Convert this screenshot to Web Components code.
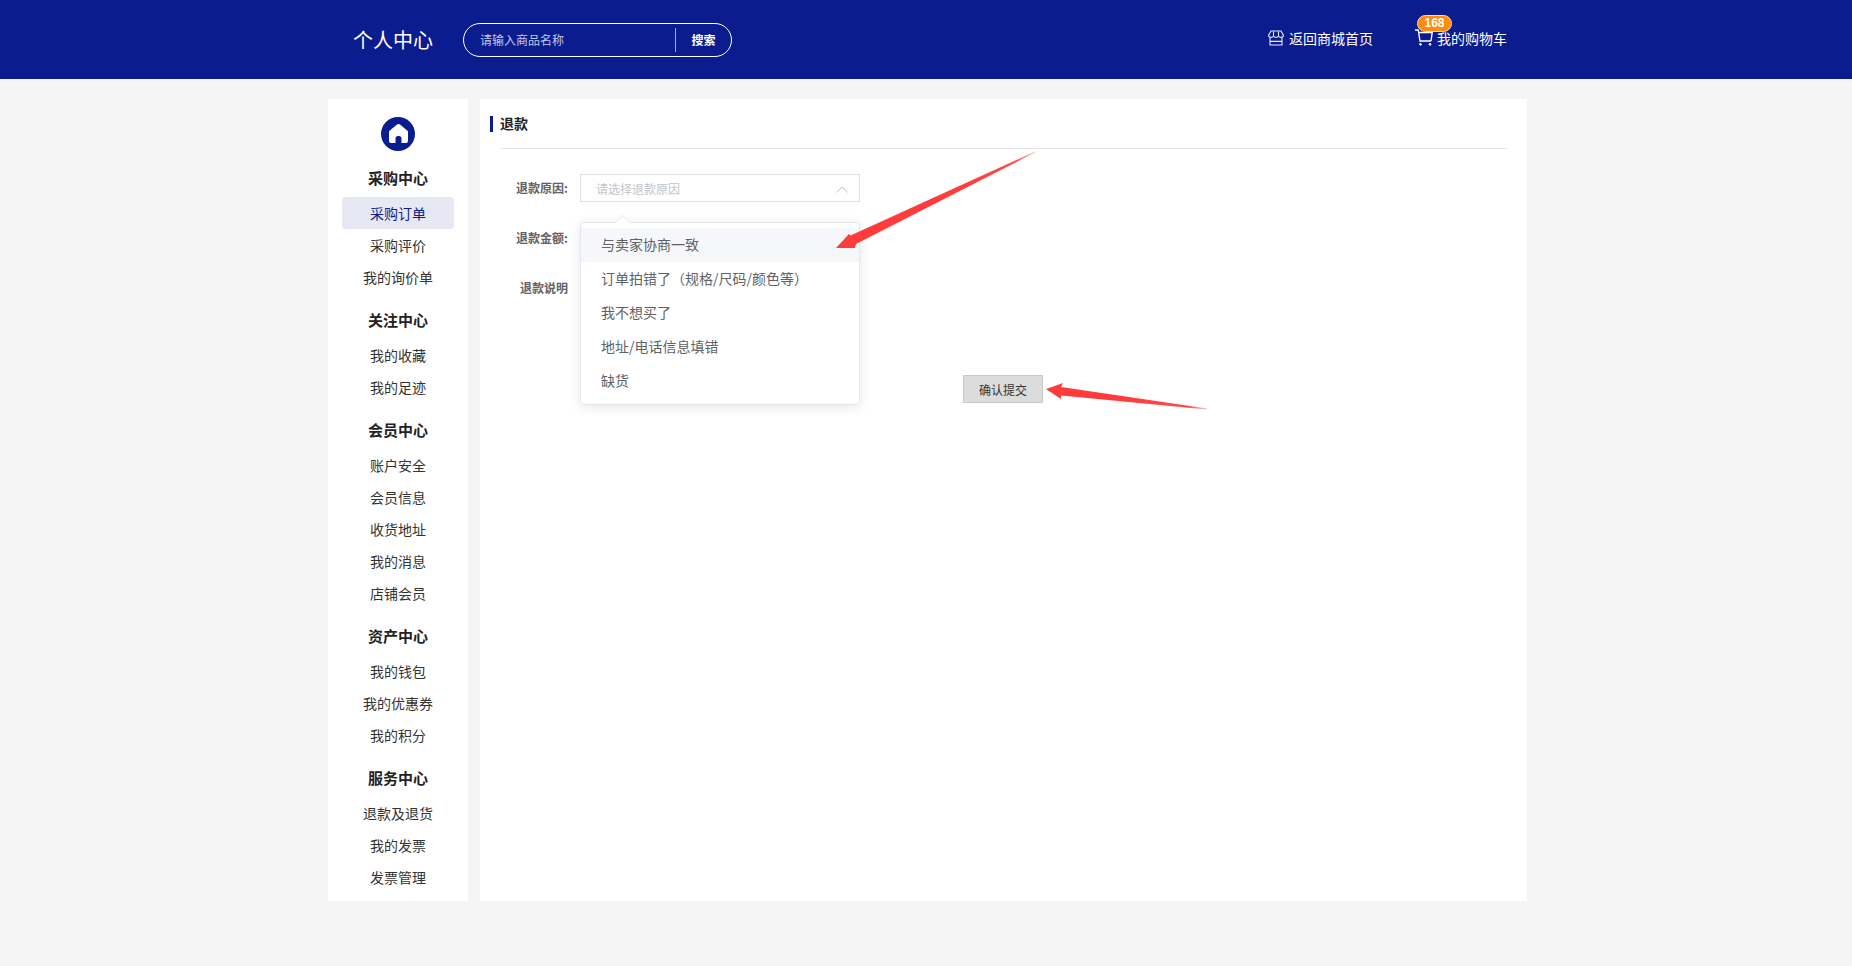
<!DOCTYPE html>
<html lang="zh-CN">
<head>
<meta charset="utf-8">
<title>退款</title>
<style>
    html,body{margin:0;padding:0;}
    body{
        background:#f5f5f5;
        font-family:"Noto Sans CJK SC","Liberation Sans",sans-serif;
        min-height:966px;
        overflow:hidden;
    }
    .page{
        display:flex;
        gap:12px;
        align-items:stretch;
        margin:20px 0 0 328px;
        width:1199px;
        height:802px;
    }
</style>
</head>
<body>
<top-bar></top-bar>
<div class="page">
    <side-nav>
        <nav-group heading="采购中心">
            <nav-item active>采购订单</nav-item>
            <nav-item>采购评价</nav-item>
            <nav-item>我的询价单</nav-item>
        </nav-group>
        <nav-group heading="关注中心">
            <nav-item>我的收藏</nav-item>
            <nav-item>我的足迹</nav-item>
        </nav-group>
        <nav-group heading="会员中心">
            <nav-item>账户安全</nav-item>
            <nav-item>会员信息</nav-item>
            <nav-item>收货地址</nav-item>
            <nav-item>我的消息</nav-item>
            <nav-item>店铺会员</nav-item>
        </nav-group>
        <nav-group heading="资产中心">
            <nav-item>我的钱包</nav-item>
            <nav-item>我的优惠券</nav-item>
            <nav-item>我的积分</nav-item>
        </nav-group>
        <nav-group heading="服务中心">
            <nav-item>退款及退货</nav-item>
            <nav-item>我的发票</nav-item>
            <nav-item>发票管理</nav-item>
        </nav-group>
    </side-nav>
    <refund-panel>
        <form-row label="退款原因:">
            <reason-select placeholder="请选择退款原因">
                <span>与卖家协商一致</span>
                <span>订单拍错了（规格/尺码/颜色等）</span>
                <span>我不想买了</span>
                <span>地址/电话信息填错</span>
                <span>缺货</span>
            </reason-select>
        </form-row>
        <form-row label="退款金额:"><text-box></text-box></form-row>
        <form-row label="退款说明"><text-box tall></text-box></form-row>
    </refund-panel>
</div>
<script>
class BaseEl extends HTMLElement{
    constructor(){
        super();
        this.attachShadow({mode:'open'});
    }
}

class TopBar extends BaseEl{
    constructor(){
        super();
        this.shadowRoot.innerHTML = `
        <style>
            :host{
                display:flex;
                align-items:center;
                height:79px;
                background:#0b1c8f;
                color:#fff;
                padding-left:353px;
                box-sizing:border-box;
            }
            .logo{font-size:20px;width:110px;line-height:79px;}
            .search{
                display:flex;
                align-items:center;
                box-sizing:border-box;
                width:269px;
                height:34px;
                border:1px solid #fff;
                border-radius:17px;
                font-size:12px;
            }
            .ph{flex:1;padding-left:16px;color:#c3c8e6;}
            .btn{
                width:56px;
                height:24px;
                line-height:24px;
                text-align:center;
                font-weight:700;
                border-left:1px solid #a0a6d0;
                box-sizing:border-box;
            }
            .link{display:flex;align-items:center;font-size:14px;line-height:20px;position:relative;margin-top:-3px;}
            .home{margin-left:536px;}
            .cart{margin-left:42px;}
            .home svg{margin-right:5px;}
            .cart svg{margin-right:4px;margin-top:-1px;}
            .badge{
                position:absolute;
                left:2px;
                top:-13px;
                box-sizing:border-box;
                width:35px;
                height:17px;
                border:1px solid #ffd9a8;
                border-radius:9px;
                background:#ff8c0a;
                text-align:center;
                font:bold 12px/15px "Liberation Sans",sans-serif;
            }
        </style>
        <div class="logo">个人中心</div>
        <div class="search"><div class="ph">请输入商品名称</div><div class="btn">搜索</div></div>
        <div class="link home">
            <svg width="16" height="16" viewBox="0 0 16 16" fill="none" stroke="#e8eaf6" stroke-width="1.1">
                <path d="M3 1h10l2.400 4.200c0 1.400-1.100 2.200-2.400 2.200-1.100 0-2-.6-2.500-1.500-.5.900-1.400 1.500-2.500 1.500S6 6.800 5.500 5.900C5 6.800 4.100 7.400 3 7.400 1.700 7.400.6 6.600.6 5.200z"/>
                <path d="M5.500 1.500v4.400M10.500 1.500v4.400"/>
                <path d="M2 7.400v7.600h12V7.400M2 11.400h12"/>
            </svg>
            返回商城首页
        </div>
        <div class="link cart">
            <svg width="18" height="17" viewBox="0 0 18 17" fill="none" stroke="#fff" stroke-width="1.4">
                <path d="M0 1h3.200l1.800 11h11"/>
                <path d="M3.600 3.500h13.600l-1.200 8.500"/>
                <circle cx="5.500" cy="15.300" r=".9" fill="#fff" stroke-width="1"/>
                <circle cx="15" cy="15.300" r=".9" fill="#fff" stroke-width="1"/>
            </svg>
            我的购物车
            <span class="badge">168</span>
        </div>`;
    }
}
customElements.define('top-bar', TopBar);

class SideNav extends BaseEl{
    constructor(){
        super();
        this.shadowRoot.innerHTML = `
        <style>
            :host{
                display:block;
                flex:0 0 140px;
                background:#fff;
                padding-top:18px;
                box-sizing:border-box;
            }
            .home{display:block;margin:0 auto 8px;}
        </style>
        <svg class="home" width="34" height="34" viewBox="0 0 34 34">
            <circle cx="17" cy="17" r="17" fill="#0b1c8f"/>
            <path d="M16 7.600Q17.500 6.500 19 7.600L26.500 13.800Q27 14.300 27 15V24Q27 26 25 26H20.500V21.500Q20.500 19 18 19H17Q14.500 19 14.500 21.500V26H10Q8 26 8 24V15Q8 14.300 8.500 13.800Z" fill="#fff"/>
        </svg>
        <slot></slot>`;
    }
}
customElements.define('side-nav', SideNav);

class NavGroup extends BaseEl{
    connectedCallback(){
        this.shadowRoot.innerHTML = `
        <style>
            :host{display:block;margin-bottom:8px;}
            h4{
                margin:0;
                height:38px;
                line-height:38px;
                font-size:15px;
                font-weight:700;
                color:#222;
                text-align:center;
            }
        </style>
        <h4>${this.getAttribute('heading')}</h4>
        <slot></slot>`;
    }
}
customElements.define('nav-group', NavGroup);

class NavItem extends BaseEl{
    constructor(){
        super();
        this.shadowRoot.innerHTML = `
        <style>
            :host{
                display:block;
                margin:0 14px;
                height:32px;
                line-height:32px;
                font-size:14px;
                color:#333;
                text-align:center;
                border-radius:4px;
            }
            :host([active]){background:#e6e8f4;color:#0b1c8f;}
        </style>
        <slot></slot>`;
    }
}
customElements.define('nav-item', NavItem);

class RefundPanel extends BaseEl{
    constructor(){
        super();
        this.shadowRoot.innerHTML = `
        <style>
            :host{
                display:block;
                flex:1;
                position:relative;
                background:#fff;
                box-sizing:border-box;
                padding:17px 20px 0 10px;
            }
            .title{
                display:flex;
                align-items:center;
                height:16px;
                font-size:14px;
                font-weight:700;
                color:#222;
                line-height:14px;
            }
            .title span{position:relative;top:-1px;}
            .title i{width:3px;height:16px;background:#0b1c8f;margin-right:7px;}
            .line{height:1px;background:#e8e8e8;margin:16px 0 25px 10px;}
            .form{display:flex;flex-direction:column;gap:22px;}
            .foot{display:flex;justify-content:center;margin:22px 0 0 0;padding-left:9px;}
            button{
                width:80px;
                height:28px;
                background:#dcdcdc;
                border:1px solid #c8c8c8;
                font:12px "Noto Sans CJK SC",sans-serif;
                color:#333;
                padding:0;
            }
        </style>
        <div class="title"><i></i><span>退款</span></div>
        <div class="line"></div>
        <div class="form"><slot></slot></div>
        <div class="foot"><button>确认提交</button></div>
        <callout-arrows></callout-arrows>`;
    }
}
customElements.define('refund-panel', RefundPanel);

class FormRow extends BaseEl{
    connectedCallback(){
        this.shadowRoot.innerHTML = `
        <style>
            :host{display:flex;align-items:flex-start;}
            label{
                width:78px;
                margin-right:12px;
                text-align:right;
                font-size:12px;
                font-weight:700;
                line-height:28px;
                color:#606266;
            }
        </style>
        <label>${this.getAttribute('label')}</label>
        <slot></slot>`;
    }
}
customElements.define('form-row', FormRow);

class TextBox extends BaseEl{
    constructor(){
        super();
        this.shadowRoot.innerHTML = `
        <style>
            :host{
                display:block;
                box-sizing:border-box;
                width:276px;
                height:28px;
                margin-left:2px;
                border:1px solid #dcdfe6;
            }
            :host([tall]){height:79px;}
        </style>`;
    }
}
customElements.define('text-box', TextBox);

class ReasonSelect extends BaseEl{
    connectedCallback(){
        this.shadowRoot.innerHTML = `
        <style>
            :host{display:block;position:relative;width:280px;}
            .box{
                display:flex;
                align-items:center;
                justify-content:space-between;
                box-sizing:border-box;
                height:28px;
                border:1px solid #dcdfe6;
                padding:0 11px 0 15px;
                font-size:12px;
                color:#c0c4cc;
            }
            .box svg{margin-top:2px;}
            .pop{
                position:absolute;
                z-index:2;
                left:0;
                top:48px;
                width:280px;
                box-sizing:border-box;
                background:#fff;
                border:1px solid #e4e7ed;
                border-radius:4px;
                box-shadow:0 2px 12px 0 rgba(0,0,0,.1);
                padding:5px 0 6px;
            }
            .pop:before{
                content:"";
                position:absolute;
                left:37px;
                top:-6px;
                width:9px;
                height:9px;
                background:#fff;
                border-left:1px solid #ebeef5;
                border-top:1px solid #ebeef5;
                transform:rotate(45deg);
            }
            ::slotted(span){
                display:block;
                position:relative;
                height:34px;
                line-height:32px;
                padding:0 20px;
                font-size:14px;
                color:#606266;
            }
            ::slotted(span:first-child){background:#f5f7fa;}
        </style>
        <div class="box">
            <span>${this.getAttribute('placeholder')}</span>
            <svg width="12" height="7" viewBox="0 0 12 7" fill="none" stroke="#c0c4cc" stroke-width="1"><path d="M.5 6.500 6 1l5.500 5.500"/></svg>
        </div>
        <div class="pop"><slot></slot></div>`;
    }
}
customElements.define('reason-select', ReasonSelect);

// red markers drawn over the screenshot, placed relative to the panel
class CalloutArrows extends BaseEl{
    constructor(){
        super();
        this.shadowRoot.innerHTML = `
        <style>
            :host{position:absolute;left:0;top:0;z-index:5;pointer-events:none;}
            svg{display:block;}
        </style>
        <svg width="1047" height="802" viewBox="480 99 1047 802">
            <defs>
                <linearGradient id="a" gradientUnits="userSpaceOnUse" x1="960" y1="188" x2="1035" y2="152">
                    <stop offset="0" stop-color="#ff3b3b"/><stop offset=".75" stop-color="#ff4a4a"/><stop offset="1" stop-color="#ff7a7a" stop-opacity=".5"/>
                </linearGradient>
                <linearGradient id="b" gradientUnits="userSpaceOnUse" x1="1120" y1="397" x2="1207" y2="409">
                    <stop offset="0" stop-color="#ff3b3b"/><stop offset=".8" stop-color="#ff4a4a"/><stop offset="1" stop-color="#ff7a7a" stop-opacity=".5"/>
                </linearGradient>
            </defs>
            <path d="M836 248 849 234 850.500 235.500 1035 151.500 1036 152 856 244 855 248Z" fill="url(#a)"/>
            <path d="M1046 389 1063 383 1061 387 1207 408.500 1207 409.500 1061 395.500 1061 399Z" fill="url(#b)"/>
        </svg>`;
    }
}
customElements.define('callout-arrows', CalloutArrows);
</script>
</body>
</html>
